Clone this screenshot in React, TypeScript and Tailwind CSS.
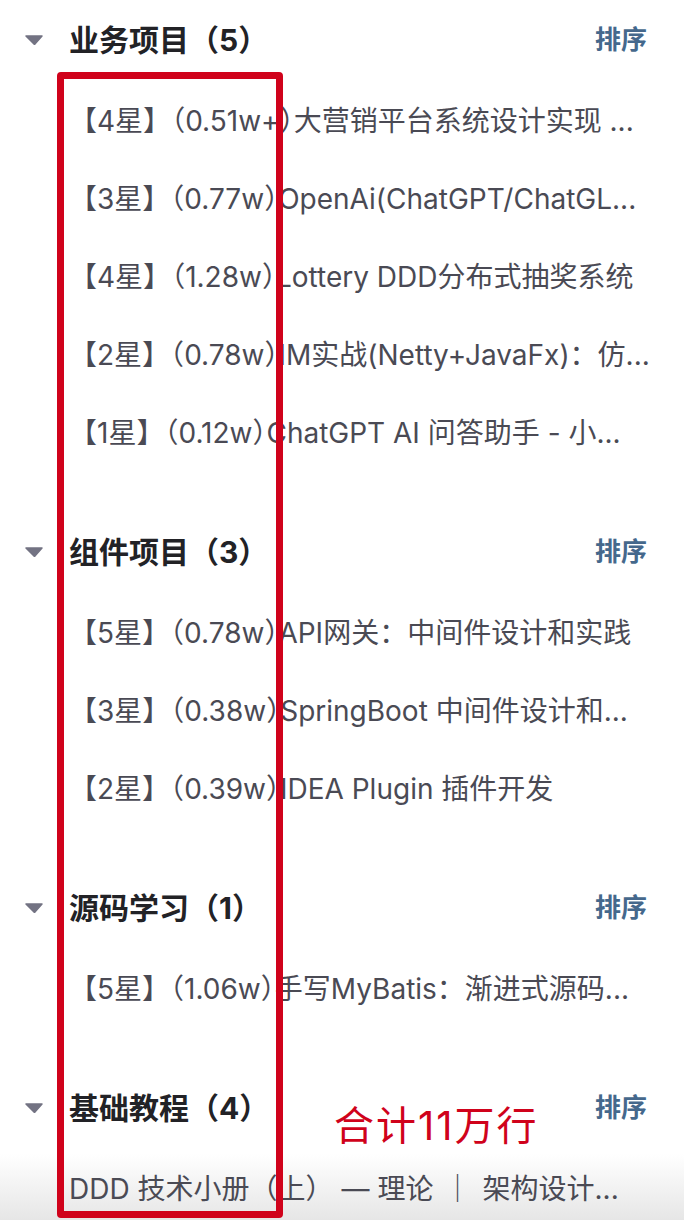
import React from "react";

const font = { fontFamily: '"Inter", "Noto Sans CJK SC", sans-serif' };

type Item = { star: string; count: string; title: string };
type Section = { title: string; items: Item[] };

const sections: Section[] = [
  {
    title: "业务项目（5）",
    items: [
      { star: "4", count: "0.51w+", title: "大营销平台系统设计实现 ..." },
      { star: "3", count: "0.77w", title: "OpenAi(ChatGPT/ChatGL..." },
      { star: "4", count: "1.28w", title: "Lottery DDD分布式抽奖系统" },
      { star: "2", count: "0.78w", title: "IM实战(Netty+JavaFx)：仿..." },
      { star: "1", count: "0.12w", title: "ChatGPT AI 问答助手 - 小..." },
    ],
  },
  {
    title: "组件项目（3）",
    items: [
      { star: "5", count: "0.78w", title: "API网关：中间件设计和实践" },
      { star: "3", count: "0.38w", title: "SpringBoot 中间件设计和..." },
      { star: "2", count: "0.39w", title: "IDEA Plugin 插件开发" },
    ],
  },
  {
    title: "源码学习（1）",
    items: [{ star: "5", count: "1.06w", title: "手写MyBatis：渐进式源码..." }],
  },
];

function Triangle() {
  return (
    <svg width="18" height="10" viewBox="0 0 18 10" className="shrink-0">
      <path d="M1 1 L17 1 L9.5 9.5 Z" fill="#737383" stroke="#737383" strokeWidth="1.5" strokeLinejoin="round" />
    </svg>
  );
}

function Header({ title }: { title: string }) {
  return (
    <div className="flex h-[56px] items-center pl-[25px] pr-[37px]">
      <Triangle />
      <div className="ml-[26px] text-[30px] font-bold text-[#222226] leading-none whitespace-nowrap">{title}</div>
      <div className="ml-auto text-[26px] font-bold text-[#45688c] leading-none">排序</div>
    </div>
  );
}

const rowCls =
  "flex h-[78px] items-center pl-[69px] pr-[34px] text-[28px] text-[#4a4a54] leading-none whitespace-nowrap overflow-hidden [text-spacing-trim:space-all]";

export default function App() {
  return (
    <div className="relative h-[1220px] w-[684px] overflow-hidden bg-white" style={font}>
      <div className="absolute bottom-0 left-0 right-0 h-[66px] bg-gradient-to-b from-white to-[#e6e6e6]" />
      <div className="relative flex flex-col gap-[52px] pt-[12px]">
        {sections.map((s) => (
          <div key={s.title} className="flex flex-col">
            <Header title={s.title} />
            <div className="mt-[14px] flex flex-col">
              {s.items.map((it) => (
                <div key={it.title} className={rowCls}>
                  <span>【{it.star}星】</span>
                  <span className="[font-feature-settings:'halt']">（</span>
                  <span>{it.count}</span>
                  <span className="[font-feature-settings:'halt']">）</span>
                  <span>{it.title}</span>
                </div>
              ))}
            </div>
          </div>
        ))}
        <div className="flex flex-col">
          <Header title="基础教程（4）" />
          <div className="mt-[14px] flex flex-col">
            <div className={rowCls}>
              <span>DDD 技术小册（上）</span>
              <span className="ml-[8px]">—</span>
              <span className="ml-[8px]">理论</span>
              <span className="ml-[10px]">｜</span>
              <span className="ml-[11px]">架构设计...</span>
            </div>
          </div>
        </div>
      </div>
      <div className="absolute left-[334px] top-[1106px] text-[40px] leading-none tracking-[2px] text-[#d0021b] whitespace-nowrap">
        合计11万行
      </div>
      <div className="absolute left-[57px] top-[72px] h-[1146px] w-[226px] rounded-[4px] border-[7px] border-[#d0021b]" />
    </div>
  );
}
